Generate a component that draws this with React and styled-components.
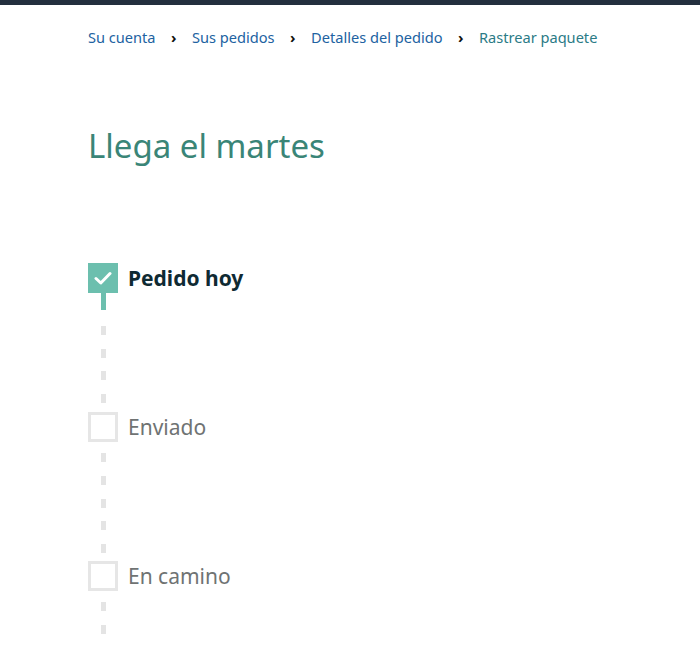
import React from "react";
import styled, { createGlobalStyle } from "styled-components";

const GlobalStyle = createGlobalStyle`
  body {
    margin: 0;
    background: #ffffff;
    font-family: "Noto Sans", "Open Sans", Arial, sans-serif;
  }
`;

const crumbs = ["Su cuenta", "Sus pedidos", "Detalles del pedido", "Rastrear paquete"];

const steps = [
  { label: "Pedido hoy", done: true },
  { label: "Enviado", done: false },
  { label: "En camino", done: false },
];

const App = () => {
  return (
    <Page>
      <GlobalStyle />
      <TopBar />
      <Content>
        <Breadcrumbs>
          {crumbs.map((c, i) => (
            <React.Fragment key={c}>
              {i > 0 && <Sep>›</Sep>}
              <Crumb $current={i === crumbs.length - 1}>{c}</Crumb>
            </React.Fragment>
          ))}
        </Breadcrumbs>

        <Title>Llega el martes</Title>

        <Steps>
          {steps.map((s, i) => (
            <Step key={s.label}>
              <StepRow>
                <Box $done={s.done}>
                  {s.done && (
                    <svg width="18" height="14" viewBox="0 0 18 14">
                      <path
                        d="M2 7.5 L6.8 12 L16 2.5"
                        fill="none"
                        stroke="#ffffff"
                        strokeWidth="3"
                        strokeLinecap="round"
                        strokeLinejoin="round"
                      />
                    </svg>
                  )}
                </Box>
                <Label $done={s.done}>{s.label}</Label>
              </StepRow>
              <Rail $last={i === steps.length - 1}>
                {s.done && <Stem />}
                <Dashes $offset={s.done ? 16 : 11} />
              </Rail>
            </Step>
          ))}
        </Steps>
      </Content>
    </Page>
  );
};

export default App;

const Page = styled.div`
  width: 700px;
  height: 648px;
  overflow: hidden;
`;

const TopBar = styled.div`
  height: 5px;
  background: #232f3e;
`;

const Content = styled.div`
  padding: 0 0 0 88px;
`;

const Breadcrumbs = styled.nav`
  display: flex;
  align-items: center;
  height: 22px;
  margin-top: 21px;
  font-size: 14.6px;
  line-height: 22px;
`;

const Crumb = styled.span`
  color: ${(p) => (p.$current ? "#2b7b86" : "#2162a1")};
  white-space: nowrap;
`;

const Sep = styled.span`
  color: #0f1111;
  font-size: 15px;
  font-weight: 700;
  margin: 0 15.5px;
`;

const Title = styled.h1`
  margin: 78px 0 0;
  font-size: 33px;
  line-height: 40px;
  font-weight: 400;
  color: #3a8577;
`;

const Steps = styled.div`
  display: flex;
  flex-direction: column;
  margin-top: 97px;
`;

const Step = styled.div`
  display: flex;
  flex-direction: column;
`;

const StepRow = styled.div`
  display: flex;
  align-items: center;
  gap: 10px;
  height: 30px;
`;

const Box = styled.div`
  box-sizing: border-box;
  width: 30px;
  height: 30px;
  display: flex;
  align-items: center;
  justify-content: center;
  background: ${(p) => (p.$done ? "#6cbfae" : "#ffffff")};
  border: ${(p) => (p.$done ? "none" : "3px solid #e6e6e6")};
`;

const Label = styled.span`
  font-size: 21px;
  line-height: 28px;
  font-weight: ${(p) => (p.$done ? 700 : 400)};
  color: ${(p) => (p.$done ? "#0f2a33" : "#6f7373")};
`;

const Rail = styled.div`
  width: 30px;
  height: ${(p) => (p.$last ? "80px" : "119px")};
  display: flex;
  flex-direction: column;
  align-items: center;
`;

const Stem = styled.div`
  width: 5px;
  height: 17px;
  background: #6cbfae;
`;

const Dashes = styled.div`
  width: 5px;
  flex: 1;
  margin-top: ${(p) => p.$offset}px;
  background: repeating-linear-gradient(
    to bottom,
    #e4e4e4 0 9px,
    transparent 9px 22.75px
  );
`;
